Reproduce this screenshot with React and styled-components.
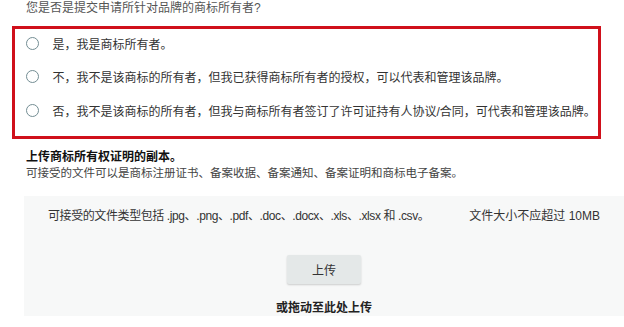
import styled, { createGlobalStyle } from "styled-components"

const GlobalStyle = createGlobalStyle`
  html, body {
    margin: 0;
    padding: 0;
    background: #fff;
    overflow: hidden;
  }
  body {
    font-family: "Liberation Sans", "Noto Sans CJK SC", sans-serif;
    color: #333;
  }
`

const Page = styled.div`
  width: 624px;
  height: 327px;
  padding-left: 12px;
  box-sizing: border-box;
`

const Question = styled.div`
  font-size: 12px;
  line-height: 16px;
  color: #555;
  padding-left: 14px;
`

const OptionBox = styled.div`
  margin-top: 10px;
  width: 589px;
  box-sizing: border-box;
  border: 3px solid #d0101b;
  padding: 4px 0 16px 10px;
  display: flex;
  flex-direction: column;
  gap: 13.5px;
`

const Option = styled.label`
  display: flex;
  align-items: center;
  height: 20px;
  gap: 14px;
  font-size: 12px;
  color: #333;
  cursor: pointer;
`

const Radio = styled.span`
  width: 13px;
  height: 13px;
  box-sizing: border-box;
  border: 1.5px solid #738d93;
  border-radius: 50%;
  flex-shrink: 0;
  margin-left: 0.5px;
`

const Section = styled.div`
  padding-left: 14px;
  margin-top: 10px;
`

const Heading = styled.div`
  font-size: 12px;
  line-height: 16px;
  font-weight: bold;
  color: #111;
`

const Hint = styled.div`
  font-size: 11.5px;
  line-height: 16px;
  color: #444;
`

const DropZone = styled.div`
  margin-top: 15px;
  margin-left: 12px;
  height: 120px;
  background: #f7f8f8;
  display: flex;
  flex-direction: column;
  align-items: center;
  padding-top: 12px;
  box-sizing: border-box;
`

const Types = styled.div`
  display: flex;
  gap: 40px;
  font-size: 12px;
  line-height: 16px;
  color: #333;
  white-space: nowrap;
`

const TypeList = styled.span`
  letter-spacing: -0.4px;
`

const UploadButton = styled.button`
  margin-top: 31px;
  width: 74px;
  height: 32px;
  border: none;
  border-radius: 2px;
  background: #e4e8e8;
  box-shadow: 0 1px 2px rgba(0, 0, 0, 0.18);
  font-family: inherit;
  font-size: 12px;
  color: #333;
  cursor: pointer;
`

const DragText = styled.div`
  margin-top: 16px;
  font-size: 12px;
  line-height: 16px;
  font-weight: bold;
  color: #222;
`

const options = [
  "是，我是商标所有者。",
  "不，我不是该商标的所有者，但我已获得商标所有者的授权，可以代表和管理该品牌。",
  "否，我不是该商标的所有者，但我与商标所有者签订了许可证持有人协议/合同，可代表和管理该品牌。",
]

export default function App() {
  return (
    <>
      <GlobalStyle />
      <Page>
        <Question>您是否是提交申请所针对品牌的商标所有者?</Question>
        <OptionBox>
          {options.map((text) => (
            <Option key={text}>
              <Radio />
              {text}
            </Option>
          ))}
        </OptionBox>
        <Section>
          <Heading>上传商标所有权证明的副本。</Heading>
          <Hint>可接受的文件可以是商标注册证书、备案收据、备案通知、备案证明和商标电子备案。</Hint>
        </Section>
        <DropZone>
          <Types>
            <TypeList>可接受的文件类型包括 .jpg、.png、.pdf、.doc、.docx、.xls、.xlsx 和 .csv。</TypeList>
            <span>文件大小不应超过 10MB</span>
          </Types>
          <UploadButton>上传</UploadButton>
          <DragText>或拖动至此处上传</DragText>
        </DropZone>
      </Page>
    </>
  )
}
